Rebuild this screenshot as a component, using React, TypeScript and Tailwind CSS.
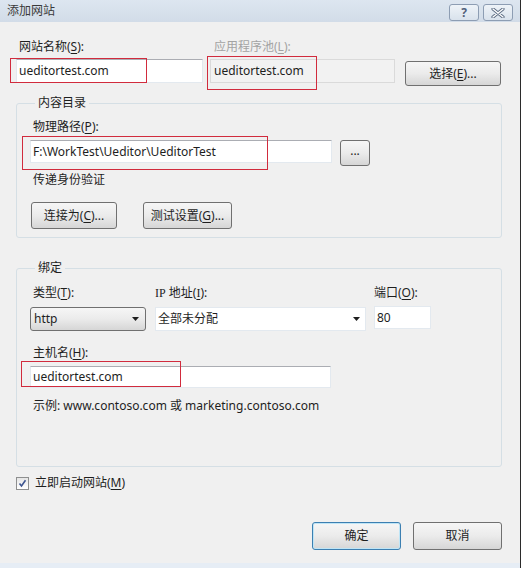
import type { ReactNode } from 'react'

const font = { fontFamily: '"Noto Sans", "Noto Sans CJK SC", sans-serif' }

function Key({ k }: { k: string }) {
  return <u className="underline-offset-[2px]">{k}</u>
}

function Btn({ children, className = '' }: { children: ReactNode; className?: string }) {
  return (
    <div
      className={`flex items-center justify-center rounded-[3px] border border-[#707070] bg-linear-to-b from-[#f6f6f6] via-[#ebebeb] to-[#d6d6d6] text-[12px] leading-[16px] text-[#1e1e1e] ${className}`}
    >
      {children}
    </div>
  )
}

function Arrow() {
  return (
    <svg width="7" height="4" viewBox="0 0 7 4">
      <path d="M0 0h7L3.5 4z" fill="#1e1e1e" />
    </svg>
  )
}

function Group({ title, children, className = '' }: { title: string; children: ReactNode; className?: string }) {
  return (
    <fieldset className={`w-[486px] rounded-[3px] border border-[#d5dfe5] pl-[13px] ${className}`}>
      <legend className="ml-[5px] px-[3px] text-[12px] leading-[16px] text-[#1e1e1e]">{title}</legend>
      {children}
    </fieldset>
  )
}

export default function App() {
  return (
    <div className="relative flex h-[568px] w-[523px] overflow-hidden bg-white" style={font}>
      <div className="flex w-[520px] flex-col bg-[#f0f0f0]">
        {/* заголовок окна */}
        <div className="flex h-[22px] items-center bg-linear-to-b from-[#dde6f0] to-[#d2dce8] pl-[7px] pr-[7px]">
          <span className="text-[12px] leading-[16px] text-[#3a3a3a]">添加网站</span>
          <div className="ml-auto mt-[3px] flex gap-[4px]">
            <div className="flex h-[17px] w-[30px] items-center justify-center rounded-[3px] border border-[#8d9db3] bg-linear-to-b from-[#eef3f8] to-[#d9e2ec]">
              <span className="text-[12px] font-bold leading-none text-[#51607a]">?</span>
            </div>
            <div className="flex h-[17px] w-[30px] items-center justify-center rounded-[3px] border border-[#8d9db3] bg-linear-to-b from-[#eef3f8] to-[#d9e2ec]">
              <svg width="14" height="10" viewBox="0 0 14 10">
                <path d="M2 1l10 8M12 1L2 9" stroke="#5b6b82" strokeWidth="3.2" strokeLinecap="round" />
                <path d="M2 1l10 8M12 1L2 9" stroke="#ffffff" strokeWidth="1.4" strokeLinecap="round" />
              </svg>
            </div>
          </div>
        </div>

        <div className="flex flex-col pl-[16px] text-[12px] leading-[16px] text-[#1e1e1e]">
          {/* строка 1 */}
          <div className="mt-[17px] flex items-start">
            <div className="flex w-[187px] flex-col gap-[4px]">
              <span className="pl-[3px]">
                网站名称(<Key k="S" />):
              </span>
              <div className="flex h-[24px] items-center border border-[#e3e9ef] border-t-[#abadb3] bg-white pl-[2px]">
                ueditortest.com
              </div>
            </div>
            <div className="ml-[7px] flex w-[185px] flex-col gap-[4px]">
              <span className="pl-[4px] text-[#a3a3a3]">
                应用程序池(<Key k="L" />):
              </span>
              <div className="flex h-[24px] items-center border border-[#dadada] bg-[#f2f2f2] pl-[3px]">ueditortest.com</div>
            </div>
            <Btn className="ml-[10px] mt-[22px] h-[25px] w-[96px]">
              选择(<Key k="E" />)...
            </Btn>
          </div>

          {/* Содержимое */}
          <Group title="内容目录" className="mt-[9px] pb-[8px]">
            <div className="mt-[8px] pl-[3px]">
              物理路径(<Key k="P" />):
            </div>
            <div className="mt-[5px] flex items-start">
              <div className="flex h-[23px] w-[302px] items-center border border-[#e3e9ef] border-t-[#abadb3] bg-white pl-[2px]">
                F:\WorkTest\Ueditor\UeditorTest
              </div>
              <Btn className="ml-[8px] h-[26px] w-[30px]">
                <span className="-mt-[4px]">...</span>
              </Btn>
            </div>
            <div className="mt-[6px] pl-[3px]">传递身份验证</div>
            <div className="mt-[14px] flex">
              <Btn className="ml-[1px] h-[27px] w-[86px]">
                连接为(<Key k="C" />)...
              </Btn>
              <Btn className="ml-[26px] h-[27px] w-[89px]">
                测试设置(<Key k="G" />)...
              </Btn>
            </div>
          </Group>

          {/* Привязка */}
          <Group title="绑定" className="mt-[22px] pb-[52px]">
            <div className="mt-[9px] flex items-start">
              <div className="flex w-[116px] flex-col gap-[6px]">
                <span className="pl-[3px]">
                  类型(<Key k="T" />):
                </span>
                <Btn className="h-[24px] w-[116px] !justify-between pl-[3px] pr-[6px]">
                  <span>http</span>
                  <Arrow />
                </Btn>
              </div>
              <div className="ml-[9px] flex w-[211px] flex-col gap-[6px]">
                <span>
                  <span style={{ fontFamily: '"Liberation Serif", serif' }}>IP</span> 地址(
                  <span style={{ fontFamily: '"Liberation Serif", serif' }}>
                    <Key k="I" />
                  </span>
                  ):
                </span>
                <div className="flex h-[24px] items-center justify-between border border-[#e3e9ef] bg-white pl-[2px] pr-[5px]">
                  <span>全部未分配</span>
                  <Arrow />
                </div>
              </div>
              <div className="ml-[8px] flex w-[57px] flex-col gap-[5px]">
                <span>
                  端口(<Key k="O" />):
                </span>
                <div className="flex h-[23px] items-center border border-[#e3e9ef] bg-white pl-[2px]">80</div>
              </div>
            </div>
            <div className="mt-[14px] pl-[3px]">
              主机名(<Key k="H" />):
            </div>
            <div className="mt-[5px] flex h-[22px] w-[301px] items-center border border-[#e3e9ef] border-t-[#abadb3] bg-white pl-[2px]">
              ueditortest.com
            </div>
            <div className="mt-[10px] pl-[3px]">示例: www.contoso.com 或 marketing.contoso.com</div>
          </Group>

          <div className="mt-[8px] flex items-center">
            <div className="flex h-[13px] w-[13px] items-center justify-center border border-[#8e8f8f] bg-linear-to-b from-[#e6e6e6] to-[#ffffff]">
              <svg width="9" height="9" viewBox="0 0 9 9">
                <path d="M1.5 4.5l2 2.5L7.5 1.2" stroke="#3d5590" strokeWidth="1.6" fill="none" />
              </svg>
            </div>
            <span className="ml-[6px]">
              立即启动网站(<Key k="M" />)
            </span>
          </div>

          <div className="mt-[31px] flex justify-end gap-[12px] pr-[18px]">
            <Btn className="h-[28px] w-[89px] !border-[#3c7fb1] shadow-[inset_0_0_0_1px_#bfe5f6]">确定</Btn>
            <Btn className="h-[28px] w-[89px]">取消</Btn>
          </div>
        </div>
        <div className="mt-auto h-[5px] bg-[#e6edf5]" />
      </div>
      <div className="w-px bg-[#2b2b2b]" />

      {/* красные пометки поверх полей */}
      <div className="pointer-events-none absolute left-[10px] top-[58px] h-[25px] w-[137px] border border-[#d12b3d]" />
      <div className="pointer-events-none absolute left-[207px] top-[56px] h-[34px] w-[110px] border border-[#d12b3d]" />
      <div className="pointer-events-none absolute left-[22px] top-[136px] h-[34px] w-[246px] border border-[#d12b3d]" />
      <div className="pointer-events-none absolute left-[21px] top-[361px] h-[26px] w-[160px] border border-[#d12b3d]" />
    </div>
  )
}
